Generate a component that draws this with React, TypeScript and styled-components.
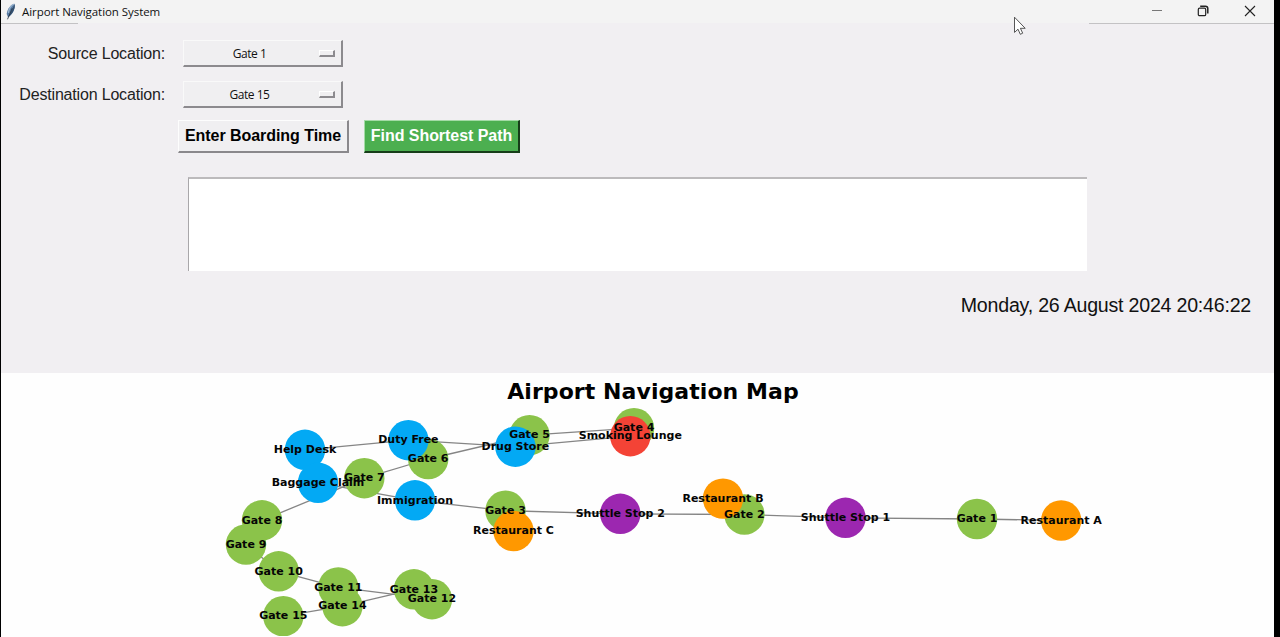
import React from "react";
import styled, { createGlobalStyle } from "styled-components";

const GlobalStyle = createGlobalStyle`
  * { box-sizing: border-box; }
  html, body { margin: 0; padding: 0; background: #000; overflow: hidden; }
  button { font: inherit; margin: 0; cursor: default; }
`;

const Window = styled.main`
  display: flex;
  flex-direction: column;
  width: 1274px;
  height: 637px;
  border-left: 1px solid #000;
  background: #f1eff2;
  color: #000;
  font-family: "Liberation Sans", Arial, sans-serif;
  overflow: hidden;
`;

const TitleBar = styled.header`
  display: flex;
  align-items: center;
  flex: none;
  height: 23px;
  padding: 0 1px 0 4px;
  background: #f3f3f3;
`;

const AppTitle = styled.h1`
  margin: 0 auto 0 6px;
  font: 400 11.5px/16px "Open Sans", "Noto Sans", sans-serif;
  letter-spacing: -0.06px;
  color: #111;
  white-space: nowrap;
`;

const WindowControls = styled.div`
  display: flex;
  height: 23px;
`;

const ControlButton = styled.button`
  display: grid;
  place-items: center;
  width: 46.5px;
  height: 22px;
  padding: 0;
  border: 0;
  background: none;
`;

const Divider = styled.div`
  display: flex;
  justify-content: space-between;
  flex: none;
  height: 1px;
`;

const DividerLine = styled.span<{ $width: number }>`
  width: ${(p) => p.$width}px;
  background: #c3c2c4;
`;

const Form = styled.section`
  display: flex;
  flex-direction: column;
  flex: none;
  height: 349px;
  padding-top: 16px;
`;

const Field = styled.div`
  display: flex;
  align-items: center;
  height: 27px;
  margin-bottom: 14px;
`;

const FieldLabel = styled.label`
  width: 164px;
  margin-right: 18px;
  font-size: 16px;
  line-height: 20px;
  letter-spacing: -0.18px;
  text-align: right;
  white-space: nowrap;
  color: #222;
`;

const OptionMenu = styled.button`
  display: flex;
  align-items: center;
  width: 160px;
  height: 27px;
  padding: 0 6px 0 0;
  border-style: solid;
  border-width: 1px 2px 2px 1px;
  border-color: #f9f9f9 #8c8a8e #8c8a8e #f9f9f9;
  background: #f0eff1;
`;

const OptionValue = styled.span`
  flex: 1;
  padding: 2px 4px 0 0;
  font: 400 12px/16px "Open Sans", "Noto Sans", sans-serif;
  letter-spacing: -0.45px;
  text-align: center;
  color: #111;
`;

const OptionIndicator = styled.span`
  width: 16px;
  height: 7px;
  border-style: solid;
  border-width: 1px 2px 2px 1px;
  border-color: #fff #8c8a8e #8c8a8e #fff;
`;

const Actions = styled.div`
  display: flex;
  gap: 15px;
  margin: -2px 0 24px 177px;
`;

const ActionButton = styled.button<{ $width: number; $primary?: boolean }>`
  width: ${(p) => p.$width}px;
  height: 33px;
  padding: 0;
  border-style: solid;
  border-width: 1px 2px 2px 1px;
  border-color: ${(p) =>
    p.$primary ? "#a4dba6 #173d19 #173d19 #a4dba6" : "#fdfdfd #8a888c #8a888c #fdfdfd"};
  background: ${(p) => (p.$primary ? "#4caf50" : "#f0eff1")};
  color: ${(p) => (p.$primary ? "#fff" : "#000")};
  font-size: 16px;
  letter-spacing: -0.05px;
  font-weight: 700;
  white-space: nowrap;
`;

const Output = styled.div`
  flex: none;
  width: 899px;
  height: 94px;
  margin-left: 187px;
  border-top: 2px solid #bcbabc;
  border-left: 1px solid #a9a7aa;
  background: #fff;
`;

const Clock = styled.time`
  margin: 23px 23px 0 auto;
  font-size: 19.6px;
  line-height: 22px;
  letter-spacing: -0.22px;
  color: #111;
  white-space: nowrap;
`;

const MapPanel = styled.section`
  flex: none;
  height: 264px;
  background: #fefefe;
`;

const MapDrawing = styled.svg`
  display: block;
`;

const MapTitle = styled.text`
  font: 700 22px "DejaVu Sans", sans-serif;
  letter-spacing: 0.07px;
  text-anchor: middle;
`;

const NodeLabel = styled.text`
  font: 700 11px "DejaVu Sans", sans-serif;
  text-anchor: middle;
  fill: #050505;
`;

const Pointer = styled.svg`
  position: absolute;
  left: 1013px;
  top: 16px;
`;

const GREEN = "#8bc34a";
const BLUE = "#03a9f4";
const ORANGE = "#ff9800";
const PURPLE = "#9c27b0";
const RED = "#f44336";

type Place = { x: number; y: number; color: string };

const places: Record<string, Place> = {
  "Gate 1": { x: 977, y: 519, color: GREEN },
  "Gate 2": { x: 744.4, y: 514.5, color: GREEN },
  "Gate 3": { x: 505.5, y: 510.7, color: GREEN },
  "Gate 4": { x: 634, y: 428.2, color: GREEN },
  "Gate 5": { x: 529.5, y: 435.2, color: GREEN },
  "Gate 6": { x: 428.2, y: 459, color: GREEN },
  "Gate 7": { x: 364.3, y: 478.2, color: GREEN },
  "Gate 8": { x: 262, y: 520.3, color: GREEN },
  "Gate 9": { x: 246, y: 544.5, color: GREEN },
  "Gate 10": { x: 278.7, y: 571.3, color: GREEN },
  "Gate 11": { x: 338.3, y: 587.4, color: GREEN },
  "Gate 12": { x: 432, y: 599.2, color: GREEN },
  "Gate 13": { x: 414, y: 589.3, color: GREEN },
  "Gate 14": { x: 342.4, y: 606.2, color: GREEN },
  "Gate 15": { x: 283.3, y: 616.2, color: GREEN },
  "Restaurant A": { x: 1061.2, y: 520.5, color: ORANGE },
  "Restaurant B": { x: 723, y: 498.6, color: ORANGE },
  "Restaurant C": { x: 513.5, y: 531, color: ORANGE },
  "Shuttle Stop 1": { x: 845.5, y: 517.8, color: PURPLE },
  "Shuttle Stop 2": { x: 620.3, y: 513.8, color: PURPLE },
  "Help Desk": { x: 305, y: 449.8, color: BLUE },
  "Duty Free": { x: 408.4, y: 440.2, color: BLUE },
  "Drug Store": { x: 515.4, y: 446.7, color: BLUE },
  "Baggage Claim": { x: 318, y: 482.8, color: BLUE },
  Immigration: { x: 415, y: 500.3, color: BLUE },
  "Smoking Lounge": { x: 630.3, y: 436.2, color: RED },
};

const routes: [string, string][] = [
  ["Restaurant A", "Gate 1"],
  ["Gate 1", "Shuttle Stop 1"],
  ["Shuttle Stop 1", "Gate 2"],
  ["Gate 2", "Restaurant B"],
  ["Gate 2", "Shuttle Stop 2"],
  ["Shuttle Stop 2", "Gate 3"],
  ["Gate 3", "Restaurant C"],
  ["Gate 3", "Immigration"],
  ["Immigration", "Baggage Claim"],
  ["Baggage Claim", "Help Desk"],
  ["Help Desk", "Duty Free"],
  ["Duty Free", "Drug Store"],
  ["Drug Store", "Smoking Lounge"],
  ["Smoking Lounge", "Gate 4"],
  ["Gate 4", "Gate 5"],
  ["Gate 5", "Gate 6"],
  ["Gate 6", "Gate 7"],
  ["Gate 7", "Gate 8"],
  ["Gate 8", "Gate 9"],
  ["Gate 9", "Gate 10"],
  ["Gate 10", "Gate 11"],
  ["Gate 11", "Gate 12"],
  ["Gate 12", "Gate 13"],
  ["Gate 13", "Gate 14"],
  ["Gate 14", "Gate 15"],
];

const FeatherIcon = () => (
  <svg width="11" height="17" viewBox="0 0 11 17" aria-hidden="true">
    <path d="M9.5.8C6 1.4 2.3 5.8 1.7 11L3 14.2C6.8 12.5 10.8 6 9.5.8Z" fill="#5a7da4" />
    <path d="M9.3 1C6 2.5 3.8 6 3.4 10" fill="none" stroke="#9ab5d0" strokeWidth="1.2" />
    <path d="M9.6 1C10.8 6 6.8 12.3 3 14.2L6.5 7.8Z" fill="#34506f" />
    <path d="M7.2 5.2 2.5 16.3" stroke="#222e3d" strokeWidth=".8" />
  </svg>
);

const NavigationMap = () => (
  <MapDrawing width="1273" height="264" viewBox="1 373 1273 264">
    <clipPath id="axes">
      <rect x="200" y="408" width="920" height="228" />
    </clipPath>
    <MapTitle x="653" y="399.3">Airport Navigation Map</MapTitle>
    <g clipPath="url(#axes)">
      {routes.map(([from, to]) => (
        <line
          key={`${from}-${to}`}
          x1={places[from].x}
          y1={places[from].y}
          x2={places[to].x}
          y2={places[to].y}
          stroke="#858585"
          strokeWidth="1.3"
        />
      ))}
      {Object.entries(places).map(([name, p]) => (
        <circle key={name} cx={p.x} cy={p.y} r="20.2" fill={p.color} />
      ))}
    </g>
    {Object.entries(places).map(([name, p]) => (
      <NodeLabel key={name} x={p.x} y={p.y + 3.2}>
        {name}
      </NodeLabel>
    ))}
  </MapDrawing>
);

export default function App() {
  return (
    <>
      <GlobalStyle />
      <Window>
        <TitleBar>
          <FeatherIcon />
          <AppTitle>Airport Navigation System</AppTitle>
          <WindowControls>
            <ControlButton aria-label="Minimize">
              <svg width="12" height="12" viewBox="0 0 12 12">
                <path d="M1 5.5h10" stroke="#777" />
              </svg>
            </ControlButton>
            <ControlButton aria-label="Restore">
              <svg width="12" height="12" viewBox="0 0 12 12" fill="none" stroke="#222" strokeWidth="1.2">
                <rect x="1.3" y="3.2" width="7.4" height="7.5" rx="1.3" />
                <path d="M3.2 1.2h5.2q2.4 0 2.4 2.4v5" strokeWidth="1.5" />
              </svg>
            </ControlButton>
            <ControlButton aria-label="Close">
              <svg width="12" height="12" viewBox="0 0 12 12">
                <path d="m1 1 10 10M11 1 1 11" stroke="#222" strokeWidth="1.1" />
              </svg>
            </ControlButton>
          </WindowControls>
        </TitleBar>
        <Divider>
          <DividerLine $width={77} />
          <DividerLine $width={185} />
        </Divider>
        <Form>
          <Field>
            <FieldLabel>Source Location:</FieldLabel>
            <OptionMenu>
              <OptionValue>Gate 1</OptionValue>
              <OptionIndicator />
            </OptionMenu>
          </Field>
          <Field>
            <FieldLabel>Destination Location:</FieldLabel>
            <OptionMenu>
              <OptionValue>Gate 15</OptionValue>
              <OptionIndicator />
            </OptionMenu>
          </Field>
          <Actions>
            <ActionButton $width={171}>Enter Boarding Time</ActionButton>
            <ActionButton $width={156} $primary>
              Find Shortest Path
            </ActionButton>
          </Actions>
          <Output />
          <Clock>Monday, 26 August 2024 20:46:22</Clock>
        </Form>
        <MapPanel>
          <NavigationMap />
        </MapPanel>
      </Window>
      <Pointer width="14" height="20" viewBox="0 0 14 20" aria-hidden="true">
        <path
          d="M1.5 1.2V16.4L5 13.2 7.3 18.3 9.7 17.2 7.4 12.3H12.2Z"
          fill="#fff"
          stroke="#444"
          strokeWidth=".9"
          strokeLinejoin="round"
        />
      </Pointer>
    </>
  );
}
